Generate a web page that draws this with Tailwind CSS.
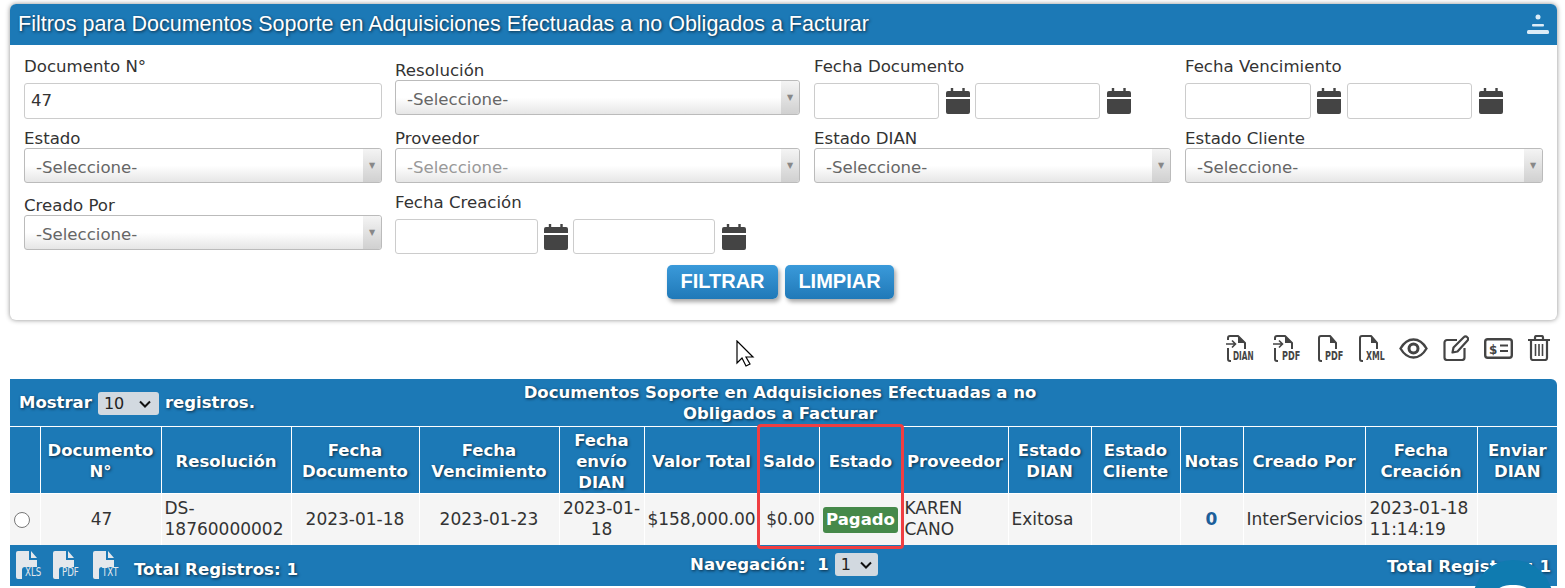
<!DOCTYPE html>
<html lang="es" class="overflow-hidden">
<head>
    <meta charset="UTF-8">
    <title>Documentos Soporte</title>
    <script src="https://cdn.jsdelivr.net/npm/@tailwindcss/browser@4"></script>
</head>
<body class="relative h-[588px] w-[1565px] overflow-hidden bg-white font-['DejaVu_Sans',sans-serif] text-[16.6px] text-[#333]">

    <svg class="hidden">
        <symbol id="cal" viewBox="0 0 25 26" preserveAspectRatio="none">
            <path fill="#444" d="M5 0h2.500v3H17V0h2.500v3H23a2 2 0 0 1 2 2v4H0V5a2 2 0 0 1 2-2h3zM0 11h25v13a2 2 0 0 1-2 2H2a2 2 0 0 1-2-2z"/>
        </symbol>
        <symbol id="page-in" viewBox="0 0 28 27">
            <path fill="none" stroke="#444" stroke-width="2" stroke-linejoin="round" d="M2 5V3a2 2 0 0 1 2-2h8l7 7v6M2 13v11a2 2 0 0 0 2 2h1"/>
            <path fill="#444" d="M12 1v7h7z"/>
            <path fill="none" stroke="#444" stroke-width="1.600" d="M0 9h9M6 5.500 9.500 9 6 12.500"/>
        </symbol>
        <symbol id="page" viewBox="0 0 27 27">
            <path fill="none" stroke="#444" stroke-width="2" stroke-linejoin="round" d="M2 24V3a2 2 0 0 1 2-2h9l6 7v6M2 24a2 2 0 0 0 2 2h1"/>
            <path fill="#444" d="M13 1v7h6z"/>
        </symbol>
        <symbol id="sheet" viewBox="0 0 26 28">
            <path fill="#e4e8ec" d="M2 0h11v9h8v7H9a3 3 0 0 0-3 3v9H2a2 2 0 0 1-2-2V2a2 2 0 0 1 2-2zM15 0l6 7h-6z"/>
        </symbol>
        <symbol id="chevron" viewBox="0 0 12 8">
            <path fill="none" stroke="#111" stroke-width="2" d="M1 1.500 6 6.500 11 1.500"/>
        </symbol>
    </svg>

    <section class="absolute left-[10px] top-[4px] h-[316px] w-[1547px] rounded-[6px] bg-white shadow-[0_0_5px_rgba(0,0,0,0.45)]">
        <header class="relative flex h-[41px] items-center rounded-t-[6px] bg-[#1c79b6] pl-[8px]">
            <h1 class="font-['Liberation_Sans',sans-serif] text-[21.500px] text-white [text-shadow:1px_1px_3px_#0b2a40]">Filtros para Documentos Soporte en Adquisiciones Efectuadas a no Obligados a Facturar</h1>
            <svg class="absolute right-[8px] top-[10px]" width="22" height="21" viewBox="0 0 22 21" fill="#dcecf7">
                <circle cx="11" cy="3" r="2.500"/>
                <rect x="5" y="10" width="12" height="2.500" rx="1"/>
                <rect x="0" y="16" width="22" height="4" rx="1.500"/>
            </svg>
        </header>

        <div class="grid grid-cols-[371px_419px_371px_358px] grid-rows-[64px_64px_71px] pl-[14px] pt-[10px]">
            <div class="flex flex-col justify-end">
                <label class="mb-[6px] leading-[20px]">Documento N°</label>
                <input value="47" class="h-[36px] w-[358px] rounded-[3px] border border-[#ccc] px-[6px] pb-[2px] text-[16.6px]">
            </div>
            <div class="flex flex-col justify-end pb-[4px]">
                <label class="mb-[-1px] leading-[20px]">Resolución</label>
                <div class="relative h-[35px] w-[405px]">
                    <select class="h-full w-full appearance-none rounded-[3px] border border-[#bbb] bg-gradient-to-b from-white from-50% to-[#e6e6e6] pl-[11px] pt-[6px] text-[#666]"><option>-Seleccione-</option></select>
                    <span class="pointer-events-none absolute bottom-px right-px top-px flex w-[18px] items-center justify-center rounded-r-[3px] bg-gradient-to-b from-[#f4f4f4] to-[#d0d0d0] text-[8px] text-[#888]">▼</span>
                </div>
            </div>
            <div class="flex flex-col justify-end">
                <label class="mb-[6px] leading-[20px]">Fecha Documento</label>
                <div class="flex h-[36px] items-center">
                    <input class="h-[36px] w-[125px] rounded-[3px] border border-[#ccc]">
                    <svg class="ml-[7px] mr-[5px] h-[26px] w-[24px]"><use href="#cal"/></svg>
                    <input class="h-[36px] w-[125px] rounded-[3px] border border-[#ccc]">
                    <svg class="ml-[7px] h-[26px] w-[24px]"><use href="#cal"/></svg>
                </div>
            </div>
            <div class="flex flex-col justify-end">
                <label class="mb-[6px] leading-[20px]">Fecha Vencimiento</label>
                <div class="flex h-[36px] items-center">
                    <input class="h-[36px] w-[126px] rounded-[3px] border border-[#ccc]">
                    <svg class="ml-[6px] mr-[6px] h-[26px] w-[24px]"><use href="#cal"/></svg>
                    <input class="h-[36px] w-[125px] rounded-[3px] border border-[#ccc]">
                    <svg class="ml-[7px] h-[26px] w-[24px]"><use href="#cal"/></svg>
                </div>
            </div>

            <div class="flex flex-col justify-end">
                <label class="mb-[-1px] leading-[20px]">Estado</label>
                <div class="relative h-[35px] w-[358px]">
                    <select class="h-full w-full appearance-none rounded-[3px] border border-[#bbb] bg-gradient-to-b from-white from-50% to-[#e6e6e6] pl-[11px] pt-[6px] text-[#666]"><option>-Seleccione-</option></select>
                    <span class="pointer-events-none absolute bottom-px right-px top-px flex w-[18px] items-center justify-center rounded-r-[3px] bg-gradient-to-b from-[#f4f4f4] to-[#d0d0d0] text-[8px] text-[#888]">▼</span>
                </div>
            </div>
            <div class="flex flex-col justify-end">
                <label class="mb-[-1px] leading-[20px]">Proveedor</label>
                <div class="relative h-[35px] w-[405px]">
                    <select class="h-full w-full appearance-none rounded-[3px] border border-[#bbb] bg-gradient-to-b from-white from-50% to-[#e6e6e6] pl-[11px] pt-[6px] text-[#999]"><option>-Seleccione-</option></select>
                    <span class="pointer-events-none absolute bottom-px right-px top-px flex w-[18px] items-center justify-center rounded-r-[3px] bg-gradient-to-b from-[#f4f4f4] to-[#d0d0d0] text-[8px] text-[#888]">▼</span>
                </div>
            </div>
            <div class="flex flex-col justify-end">
                <label class="mb-[-1px] leading-[20px]">Estado DIAN</label>
                <div class="relative h-[35px] w-[357px]">
                    <select class="h-full w-full appearance-none rounded-[3px] border border-[#bbb] bg-gradient-to-b from-white from-50% to-[#e6e6e6] pl-[11px] pt-[6px] text-[#666]"><option>-Seleccione-</option></select>
                    <span class="pointer-events-none absolute bottom-px right-px top-px flex w-[18px] items-center justify-center rounded-r-[3px] bg-gradient-to-b from-[#f4f4f4] to-[#d0d0d0] text-[8px] text-[#888]">▼</span>
                </div>
            </div>
            <div class="flex flex-col justify-end">
                <label class="mb-[-1px] leading-[20px]">Estado Cliente</label>
                <div class="relative h-[35px] w-[358px]">
                    <select class="h-full w-full appearance-none rounded-[3px] border border-[#bbb] bg-gradient-to-b from-white from-50% to-[#e6e6e6] pl-[11px] pt-[6px] text-[#666]"><option>-Seleccione-</option></select>
                    <span class="pointer-events-none absolute bottom-px right-px top-px flex w-[18px] items-center justify-center rounded-r-[3px] bg-gradient-to-b from-[#f4f4f4] to-[#d0d0d0] text-[8px] text-[#888]">▼</span>
                </div>
            </div>

            <div class="flex flex-col justify-end pb-[4px]">
                <label class="mb-[-1px] leading-[20px]">Creado Por</label>
                <div class="relative h-[35px] w-[358px]">
                    <select class="h-full w-full appearance-none rounded-[3px] border border-[#bbb] bg-gradient-to-b from-white from-50% to-[#e6e6e6] pl-[11px] pt-[6px] text-[#666]"><option>-Seleccione-</option></select>
                    <span class="pointer-events-none absolute bottom-px right-px top-px flex w-[18px] items-center justify-center rounded-r-[3px] bg-gradient-to-b from-[#f4f4f4] to-[#d0d0d0] text-[8px] text-[#888]">▼</span>
                </div>
            </div>
            <div class="flex flex-col justify-end">
                <label class="mb-[6px] leading-[20px]">Fecha Creación</label>
                <div class="flex h-[35px] items-center">
                    <input class="h-[35px] w-[143px] rounded-[3px] border border-[#ccc]">
                    <svg class="ml-[6px] mr-[5px] h-[26px] w-[24px]"><use href="#cal"/></svg>
                    <input class="h-[35px] w-[142px] rounded-[3px] border border-[#ccc]">
                    <svg class="ml-[7px] h-[26px] w-[24px]"><use href="#cal"/></svg>
                </div>
            </div>
        </div>

        <div class="ml-[657px] mt-[11px] flex gap-[7px] font-['Liberation_Sans',sans-serif] text-[20px] font-bold text-white">
            <button class="h-[34px] w-[111px] rounded-[5px] bg-gradient-to-b from-[#3a9ada] to-[#2079b8] pb-[2px] shadow-[2px_3px_4px_rgba(0,0,0,0.35)]">FILTRAR</button>
            <button class="h-[34px] w-[109px] rounded-[5px] bg-gradient-to-b from-[#3a9ada] to-[#2079b8] pb-[2px] shadow-[2px_3px_4px_rgba(0,0,0,0.35)]">LIMPIAR</button>
        </div>
    </section>

    <!-- barra de acciones -->
    <div class="absolute left-[1226px] top-[335px] flex items-start font-['DejaVu_Sans_Condensed',sans-serif] text-[#444]">
        <div class="relative h-[27px] w-[47px]"><svg class="h-[27px] w-[28px]"><use href="#page-in"/></svg><span class="absolute left-[7px] top-[16px] origin-left scale-x-[0.68] text-[12px] font-bold leading-[11px]">DIAN</span></div>
        <div class="relative h-[27px] w-[44px]"><svg class="h-[27px] w-[28px]"><use href="#page-in"/></svg><span class="absolute left-[9px] top-[16px] origin-left scale-x-[0.75] text-[12px] font-bold leading-[11px]">PDF</span></div>
        <div class="relative h-[27px] w-[41px]"><svg class="h-[27px] w-[27px]"><use href="#page"/></svg><span class="absolute left-[8px] top-[16px] origin-left scale-x-[0.75] text-[12px] font-bold leading-[11px]">PDF</span></div>
        <div class="relative h-[27px] w-[41px]"><svg class="h-[27px] w-[27px]"><use href="#page"/></svg><span class="absolute left-[8px] top-[16px] origin-left scale-x-[0.72] text-[12px] font-bold leading-[11px]">XML</span></div>
        <svg class="mt-[3px] mr-[15px]" width="29" height="21" viewBox="0 0 29 21" fill="none" stroke="#444">
            <path stroke-width="2.400" d="M1.500 10.500C5 4.500 9.500 1.500 14.500 1.500s9.500 3 13 9c-3.500 6-8 9-13 9s-9.500-3-13-9z"/>
            <circle cx="14.500" cy="10.500" r="4.500" stroke-width="3"/>
        </svg>
        <svg class="mr-[15px]" width="26" height="26" viewBox="0 0 26 26" fill="none" stroke="#444" stroke-width="2.200" stroke-linejoin="round">
            <path d="M14 5H4a2.500 2.500 0 0 0-2.500 2.500v15A2.500 2.500 0 0 0 4 25h15a2.500 2.500 0 0 0 2.500-2.500V13"/>
            <path d="M9.500 17.500l1-5L21 2a2 2 0 0 1 3 0l.500.500a2 2 0 0 1 0 3L14.500 16.500z"/>
        </svg>
        <svg class="mt-[3px] mr-[15px]" width="29" height="21" viewBox="0 0 29 21" fill="none" stroke="#444">
            <rect x="1.200" y="1.200" width="26.600" height="18.600" rx="2.500" stroke-width="2.400"/>
            <path stroke-width="2" d="M16 7.500h8M16 13h8"/>
            <text x="5" y="15.500" fill="#444" stroke="none" font-size="12" font-weight="700" font-family="DejaVu Sans">$</text>
        </svg>
        <svg width="22" height="26" viewBox="0 0 22 26" fill="none" stroke="#444" stroke-width="2.200" stroke-linejoin="round">
            <path d="M0 5h22M7 5V2.500A1.500 1.500 0 0 1 8.500 1h5A1.500 1.500 0 0 1 15 2.500V5M3 5v18a2 2 0 0 0 2 2h12a2 2 0 0 0 2-2V5"/>
            <path stroke-width="1.600" d="M7.500 9v12M11 9v12M14.500 9v12"/>
        </svg>
    </div>

    <section class="absolute left-[10px] top-[379px] w-[1547px] overflow-hidden rounded-tr-[6px] bg-[#1c79b6] text-white">
        <div class="grid h-[47px] grid-cols-[500px_540px_1fr] text-[16.500px] font-bold [text-shadow:1px_1px_3px_#0b2a40]">
            <div class="flex items-center pl-[9px] pt-[2px]">
                Mostrar
                <span class="relative mx-[6px] h-[23px] w-[61px]">
                    <select class="h-full w-full appearance-none rounded-[3px] bg-[#d2d9e0] pl-[6px] text-[16px] font-normal text-[#222] [text-shadow:none]"><option>10</option></select>
                    <svg class="pointer-events-none absolute right-[8px] top-[8px] h-[8px] w-[12px]"><use href="#chevron"/></svg>
                </span>
                registros.
            </div>
            <div class="pt-[3px] text-center leading-[21px]">Documentos Soporte en Adquisiciones Efectuadas a no<br>Obligados a Facturar</div>
        </div>

        <table class="w-[1547px] table-fixed border-collapse text-center">
            <colgroup>
                <col class="w-[30px]"><col class="w-[121px]"><col class="w-[130px]"><col class="w-[128px]"><col class="w-[140px]">
                <col class="w-[85px]"><col class="w-[115px]"><col class="w-[60px]"><col class="w-[83px]"><col class="w-[106px]">
                <col class="w-[83px]"><col class="w-[89px]"><col class="w-[63px]"><col class="w-[122px]"><col class="w-[112px]"><col>
            </colgroup>
            <thead class="text-[16.500px] leading-[21px] [text-shadow:1px_1px_3px_#0b2a40]">
                <tr class="h-[67px] border-y border-white">
                    <th class="border-r border-white"></th>
                    <th class="border-r border-white px-0 pt-[2px]">Documento N°</th>
                    <th class="border-r border-white pt-[3px]">Resolución</th>
                    <th class="border-r border-white pt-[2px]">Fecha Documento</th>
                    <th class="border-r border-white pt-[2px]">Fecha Vencimiento</th>
                    <th class="border-r border-white pt-[3px]">Fecha envío DIAN</th>
                    <th class="border-r border-white pt-[3px]">Valor Total</th>
                    <th class="border-r border-white pt-[3px]">Saldo</th>
                    <th class="border-r border-white pt-[3px]">Estado</th>
                    <th class="border-r border-white pt-[3px]">Proveedor</th>
                    <th class="border-r border-white pt-[2px]">Estado DIAN</th>
                    <th class="border-r border-white pt-[2px]">Estado Cliente</th>
                    <th class="border-r border-white pt-[3px]">Notas</th>
                    <th class="border-r border-white pt-[3px]">Creado Por</th>
                    <th class="border-r border-white pt-[2px]">Fecha Creación</th>
                    <th class="pt-[2px]">Enviar DIAN</th>
                </tr>
            </thead>
            <tbody class="bg-[#f5f5f5] text-[17px] leading-[21px] text-[#333]">
                <tr class="h-[51px]">
                    <td class="border-r border-white pr-[6px]"><input type="radio" class="h-[16px] w-[16px] appearance-none rounded-full border border-[#777] bg-white align-middle"></td>
                    <td class="border-r border-white pl-[2px]">47</td>
                    <td class="border-r border-white px-[3px] text-left">DS-<br>18760000002</td>
                    <td class="border-r border-white">2023-01-18</td>
                    <td class="border-r border-white">2023-01-23</td>
                    <td class="border-r border-white">2023-01-<br>18</td>
                    <td class="border-r border-white px-0">$158,000.00</td>
                    <td class="border-r border-white pl-[3px]">$0.00</td>
                    <td class="border-r border-white"><span class="relative top-[1px] inline-block h-[26px] w-[75px] rounded-[3px] bg-[#46894a] text-[16.500px] font-bold leading-[26px] text-white">Pagado</span></td>
                    <td class="border-r border-white pl-[2px] text-left">KAREN<br>CANO</td>
                    <td class="border-r border-white pl-[3px] text-left">Exitosa</td>
                    <td class="border-r border-white"></td>
                    <td class="border-r border-white font-bold text-[#1c5f9a]">0</td>
                    <td class="border-r border-white whitespace-nowrap px-[3px] text-left">InterServicios</td>
                    <td class="border-r border-white px-[4px] text-left">2023-01-18<br>11:14:19</td>
                    <td></td>
                </tr>
            </tbody>
        </table>

        <div class="relative flex h-[41px] items-center justify-between text-[16.600px] font-bold [text-shadow:1px_1px_3px_#0b2a40]">
            <div class="flex items-center pl-[6px]">
                <span class="relative mr-[11px] h-[28px] w-[26px]"><svg class="h-[28px] w-[26px]"><use href="#sheet"/></svg><span class="absolute left-[9px] top-[16px] origin-left scale-x-[0.8] font-['DejaVu_Sans_Condensed',sans-serif] text-[12px] font-normal leading-[11px] text-[#e4e8ec] [text-shadow:none]">XLS</span></span>
                <span class="relative mr-[15px] h-[28px] w-[25px]"><svg class="h-[28px] w-[26px]"><use href="#sheet"/></svg><span class="absolute left-[9px] top-[16px] origin-left scale-x-[0.8] font-['DejaVu_Sans_Condensed',sans-serif] text-[12px] font-normal leading-[11px] text-[#e4e8ec] [text-shadow:none]">PDF</span></span>
                <span class="relative mr-[15px] h-[28px] w-[26px]"><svg class="h-[28px] w-[26px]"><use href="#sheet"/></svg><span class="absolute left-[9px] top-[16px] origin-left scale-x-[0.8] font-['DejaVu_Sans_Condensed',sans-serif] text-[12px] font-normal leading-[11px] text-[#e4e8ec] [text-shadow:none]">TXT</span></span>
                <span class="mt-[10px]">Total Registros: 1</span>
            </div>
            <div class="absolute left-[680px] top-[8px] flex items-center">
                Navegación:&nbsp; 1
                <span class="relative ml-[6px] h-[23px] w-[43px]">
                    <select class="h-full w-full appearance-none rounded-[3px] bg-[#d2d9e0] pl-[6px] text-[16px] font-normal text-[#222] [text-shadow:none]"><option>1</option></select>
                    <svg class="pointer-events-none absolute right-[6px] top-[8px] h-[8px] w-[12px]"><use href="#chevron"/></svg>
                </span>
            </div>
            <div class="pr-[6px] pt-[4px]">Total Registros: 1</div>
        </div>
    </section>

    <!-- resaltado y elementos sobre la captura -->
    <div class="absolute left-[757px] top-[424px] h-[125px] w-[147px] rounded-[4px] border-[3px] border-[#ef3e42]"></div>

    <div class="absolute left-[1473px] top-[560px] h-[28px] w-[80px] overflow-hidden">
        <div class="h-[80px] w-[80px] rounded-full bg-[#0f7bb0] pt-[25px]">
            <div class="mx-auto h-[40px] w-[46px] rounded-full bg-white"></div>
        </div>
    </div>

    <svg class="absolute left-[736px] top-[340px]" width="19" height="28" viewBox="0 0 19 28">
        <path fill="#fff" stroke="#000" stroke-width="1.200" d="M1 1v22l5-5 4 8 4-2-4-7h7z"/>
    </svg>
</body>
</html>
